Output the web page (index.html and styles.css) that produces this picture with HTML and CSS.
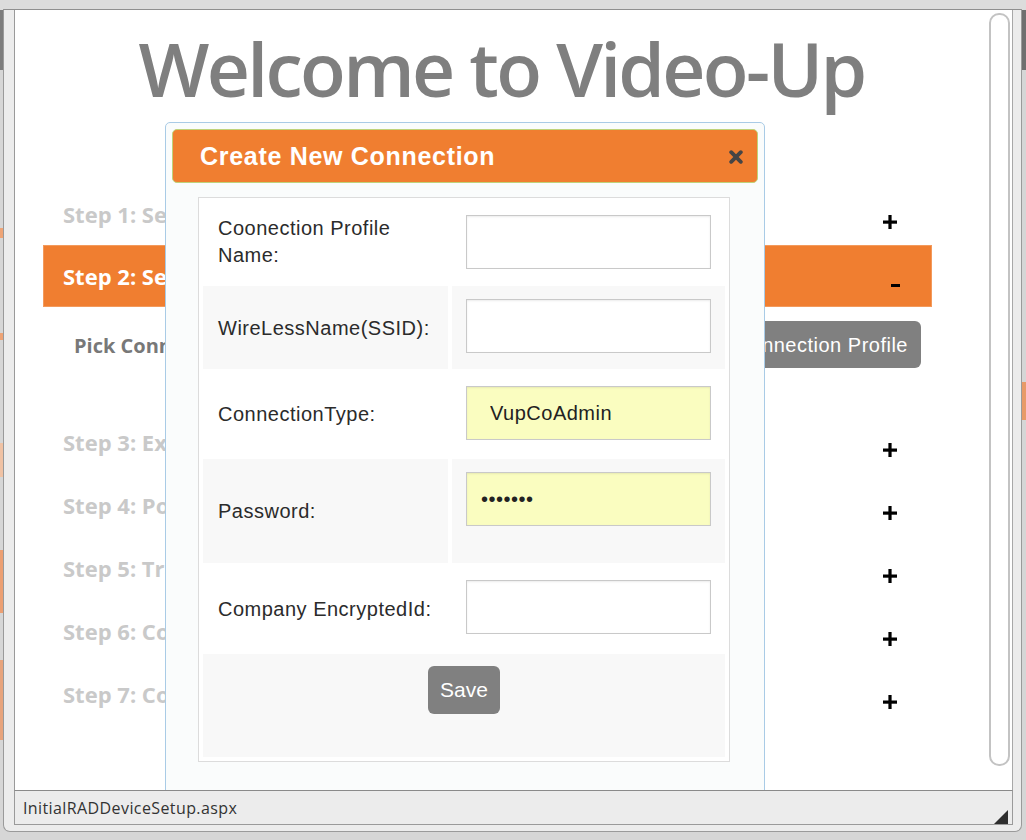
FILE: index.html
```html
<!DOCTYPE html>
<html lang="en">
<head>
<meta charset="utf-8">
<title>InitialRADDeviceSetup.aspx</title>
<link rel="stylesheet" href="styles.css">
</head>
<body>
<div class="window">
  <div class="viewport">
    <div class="page">
      <h1 class="title">Welcome to Video-Up</h1>
      <div class="steps">
        <div class="step-head">
          <span class="step-name">Step 1: Select</span>
          <svg class="sign" width="14" height="14" viewBox="0 0 14 14"><rect x="0" y="5.5" width="14" height="3.2" fill="#000"/><rect x="5.4" y="0" width="3.2" height="14" fill="#000"/></svg>
        </div>
        <div class="step-head active">
          <span class="step-name">Step 2: Setup</span>
          <svg class="sign minus" width="9" height="3" viewBox="0 0 9 3"><rect x="0" y="0" width="9" height="3" fill="#000"/></svg>
        </div>
        <div class="step-body">
          <span class="pick">Pick Connection</span>
          <button class="btn profile-btn">Create New Connection Profile</button>
        </div>
        <div class="step-head">
          <span class="step-name">Step 3: Export</span>
          <svg class="sign" width="14" height="14" viewBox="0 0 14 14"><rect x="0" y="5.5" width="14" height="3.2" fill="#000"/><rect x="5.4" y="0" width="3.2" height="14" fill="#000"/></svg>
        </div>
        <div class="step-head">
          <span class="step-name">Step 4: Power</span>
          <svg class="sign" width="14" height="14" viewBox="0 0 14 14"><rect x="0" y="5.5" width="14" height="3.2" fill="#000"/><rect x="5.4" y="0" width="3.2" height="14" fill="#000"/></svg>
        </div>
        <div class="step-head">
          <span class="step-name">Step 5: Transfer</span>
          <svg class="sign" width="14" height="14" viewBox="0 0 14 14"><rect x="0" y="5.5" width="14" height="3.2" fill="#000"/><rect x="5.4" y="0" width="3.2" height="14" fill="#000"/></svg>
        </div>
        <div class="step-head">
          <span class="step-name">Step 6: Copy</span>
          <svg class="sign" width="14" height="14" viewBox="0 0 14 14"><rect x="0" y="5.5" width="14" height="3.2" fill="#000"/><rect x="5.4" y="0" width="3.2" height="14" fill="#000"/></svg>
        </div>
        <div class="step-head">
          <span class="step-name">Step 7: Complete</span>
          <svg class="sign" width="14" height="14" viewBox="0 0 14 14"><rect x="0" y="5.5" width="14" height="3.2" fill="#000"/><rect x="5.4" y="0" width="3.2" height="14" fill="#000"/></svg>
        </div>
      </div>
    </div>
    <div class="scroll-track"><div class="scroll-thumb"></div></div>

    <div class="dialog">
      <div class="dialog-head">
        <span class="dialog-title">Create New Connection</span>
        <svg class="close" width="14" height="14" viewBox="0 0 14 14"><path d="M2.2 2.2 L11.8 11.8 M11.8 2.2 L2.2 11.8" stroke="#454545" stroke-width="3.8" stroke-linecap="round"/></svg>
      </div>
      <div class="panel">
        <div class="form-grid">
          <div class="cell label two-line">Coonection Profile Name:</div>
          <div class="cell field"><input class="txt" type="text"></div>

          <div class="cell label alt">WireLessName(SSID):</div>
          <div class="cell field alt"><input class="txt" type="text"></div>

          <div class="cell label">ConnectionType:</div>
          <div class="cell field"><input class="txt autofill indent" type="text" value="VupCoAdmin"></div>

          <div class="cell label alt">Password:</div>
          <div class="cell field alt"><input class="txt autofill" type="password" value="1234567"></div>

          <div class="cell label">Company EncryptedId:</div>
          <div class="cell field"><input class="txt" type="text"></div>

          <div class="cell actions alt"><button class="btn save-btn">Save</button></div>
        </div>
      </div>
    </div>
  </div>
  <div class="statusbar">
    <span class="status-text">InitialRADDeviceSetup.aspx</span>
    <svg class="grip" width="14" height="14" viewBox="0 0 14 14"><path d="M14 0 L14 14 L0 14 Z" fill="#2e2e2e"/></svg>
  </div>
</div>
</body>
</html>
```

FILE: styles.css
```css
* { box-sizing: border-box; }

html, body {
  margin: 0;
  padding: 0;
}

body {
  width: 1026px;
  height: 840px;
  overflow: hidden;
  background:
    linear-gradient(to bottom,
      #dcdcdc 0, #dcdcdc 10px, #7d7d7d 10px, #7d7d7d 70px, #d6d6d6 70px,
      #d6d6d6 228px, #eea476 228px, #eea476 238px, #d6d6d6 238px,
      #d6d6d6 333px, #eea476 333px, #eea476 340px, #d6d6d6 340px,
      #d6d6d6 443px, #f0c2a4 443px, #f0c2a4 477px, #d6d6d6 477px,
      #d6d6d6 550px, #ec9f72 550px, #ec9f72 613px, #d6d6d6 613px,
      #d6d6d6 660px, #e8a47c 660px, #e8a47c 740px, #d6d6d6 740px) 0 0 / 3px 100% no-repeat,
    linear-gradient(to bottom,
      #dcdcdc 0, #dcdcdc 10px, #6f6f6f 10px, #6f6f6f 70px, #d6d6d6 70px,
      #d6d6d6 382px, #e89a68 382px, #e89a68 420px, #d6d6d6 420px) 1022px 0 / 4px 100% no-repeat,
    linear-gradient(to bottom, #dcdcdc 0, #dcdcdc 10px, #d6d6d6 10px, #d6d6d6 100%);
  font-family: "Liberation Sans", Arial, sans-serif;
}

.window {
  margin: 9px 0 0 3px;
  width: 1019px;
  height: 823px;
  background: #ececec;
  border: 1px solid #9a9a9a;
  border-top-color: #8f8f8f;
  border-radius: 0 0 7px 7px;
  padding: 0 8px 6px 10px;
  display: flex;
  flex-direction: column;
}

.viewport {
  position: relative;
  height: 780px;
  background: #fff;
  border-left: 1px solid #9a9a9a;
  border-right: 1px solid #a8a8a8;
  overflow: hidden;
  display: flex;
}

.page {
  flex: 1;
}

.title {
  margin: 20px 0 0;
  text-align: center;
  font-family: "Open Sans", sans-serif;
  font-weight: 600;
  font-size: 75px;
  line-height: 76px;
  letter-spacing: -2.7px;
  color: #7f7f7f;
}

.steps {
  margin: 76px 0 0 28px;
  width: 889px;
}

.step-head {
  height: 63px;
  display: flex;
  align-items: center;
  justify-content: space-between;
  padding: 0 35px 0 20px;
}

.step-name {
  font-family: "Open Sans", sans-serif;
  font-weight: 700;
  font-size: 22px;
  line-height: 26px;
  color: #c9c9c9;
  white-space: nowrap;
}

.sign {
  margin-top: 16px;
  display: block;
}

.step-head.active {
  height: 62px;
  background: #f07e30;
  box-shadow: inset 0 0 0 1px #f39a5c;
}

.step-head.active .step-name {
  color: #fff;
}

.sign.minus {
  margin-top: 18px;
  margin-right: -3px;
}

.step-body {
  height: 103px;
  display: flex;
  align-items: center;
  justify-content: space-between;
  padding: 14px 11px 42px 31px;
}

.pick {
  white-space: nowrap;
  line-height: 22px;
  margin-top: 2px;
  font-family: "Open Sans", sans-serif;
  font-weight: 700;
  font-size: 20px;
  color: #787878;
}

.btn {
  border: none;
  background: #808080;
  color: #fff;
  font-family: "Liberation Sans", Arial, sans-serif;
  border-radius: 6px;
  cursor: pointer;
}

.profile-btn {
  height: 47px;
  padding: 2px 13px 0 14px;
  font-size: 20px;
  letter-spacing: 0.5px;
}

.scroll-track {
  width: 24px;
  padding: 3px 1px 24px 1px;
}

.scroll-thumb {
  width: 21px;
  height: 100%;
  border: 2px solid #c3c3c3;
  border-radius: 10px;
  background: #fff;
}

/* dialog */
.dialog {
  position: absolute;
  left: 150px;
  top: 112px;
  width: 600px;
  height: 720px;
  background: #fafcfc;
  border: 1px solid #a9cbe6;
  border-radius: 5px;
  padding: 6px;
}

.dialog-head {
  height: 54px;
  background: #f07e30;
  border: 1px solid #bfd27a;
  border-radius: 5px;
  display: flex;
  align-items: center;
  justify-content: space-between;
  padding: 0 14px 0 27px;
}

.dialog-title {
  color: #fff;
  font-weight: 700;
  font-size: 25px;
  letter-spacing: 0.7px;
}

.close {
  display: block;
  margin-top: 1px;
}

.panel {
  margin: 14px 0 0 26px;
  width: 532px;
  background: #fff;
  border: 1px solid #dcdcdc;
}

.form-grid {
  display: grid;
  grid-template-columns: 245px 273px;
  grid-template-rows: 80px 83px 82px 104px 83px 103px;
  gap: 4px;
  padding: 4px;
}

.cell {
  background: #fff;
}

.cell.alt {
  background: #f8f8f8;
}

.label {
  display: flex;
  align-items: center;
  padding: 0 15px;
  font-size: 20px;
  letter-spacing: 0.5px;
  line-height: 22px;
  color: #2b2b2b;
}

.label.two-line {
  line-height: 27px;
}

.field {
  padding: 13px 14px 0;
}

.txt {
  display: block;
  width: 245px;
  height: 54px;
  margin: 0;
  border: 1px solid #c9c9c9;
  box-shadow: inset 0 1px 2px rgba(0, 0, 0, 0.08);
  background: #fff;
  padding: 0 14px;
  font-family: "Liberation Sans", Arial, sans-serif;
  font-size: 20px;
  letter-spacing: 0.5px;
  color: #222;
  outline: none;
}

.txt.autofill {
  background: #fafdc0;
}

.txt.indent {
  padding-left: 23px;
}

.actions {
  grid-column: 1 / span 2;
  display: flex;
  justify-content: center;
  align-items: flex-start;
  padding-top: 12px;
}

.save-btn {
  width: 72px;
  height: 48px;
  font-size: 21px;
  padding: 0;
}

/* status bar */
.statusbar {
  height: 35px;
  background: #ececec;
  border: 1px solid #9a9a9a;
  border-top-color: #8a8a8a;
  display: flex;
  align-items: flex-end;
  justify-content: space-between;
  padding: 0 4px 0 8px;
}

.status-text {
  align-self: center;
  font-family: "Open Sans", sans-serif;
  font-size: 16px;
  letter-spacing: 0.4px;
  color: #333;
}

.grip {
  display: block;
  margin-bottom: 0;
}
```
